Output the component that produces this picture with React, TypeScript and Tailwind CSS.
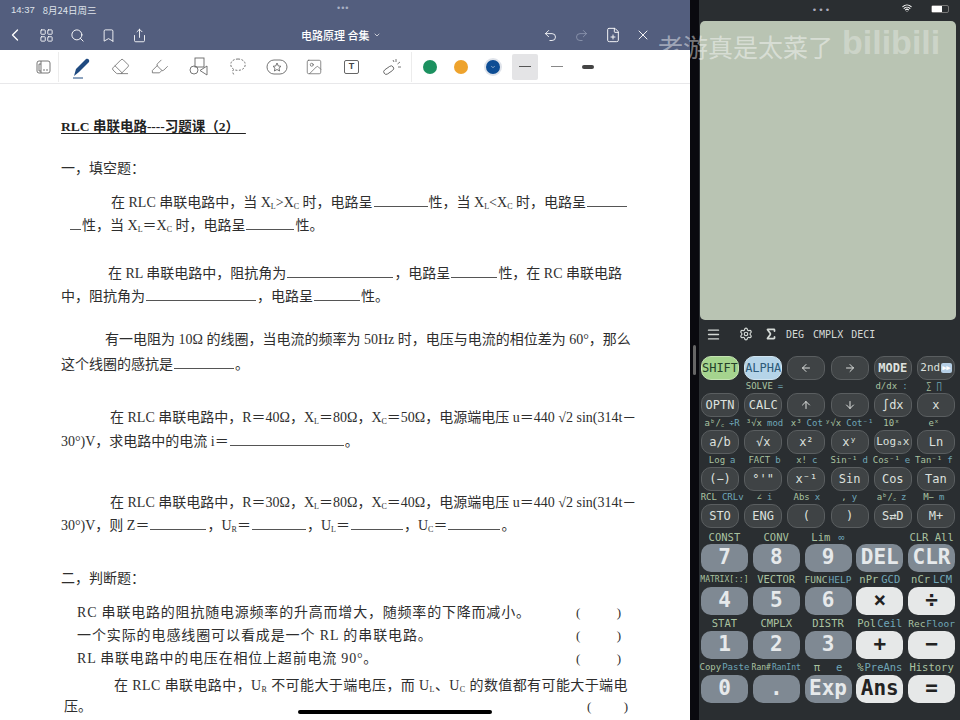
import { ArrowLeft, ArrowRight, ArrowUp, ArrowDown, Bookmark, ChevronDown, ChevronLeft, Eraser, FilePlus, Highlighter, Image, LayoutGrid, Menu, Redo2, Search, Settings, Share, Sigma, Undo2, Wifi, X } from 'lucide-react';
import type { ReactNode } from 'react';

const ink = 'text-[#2e2e2e]';

function DocLine({ top, left = 0, spread = '', children }: { top: number; left?: number; spread?: string; children: ReactNode }) {
  return (
    <p className={`h-[20px] whitespace-nowrap text-[14px] leading-[20px] ${ink} ${spread}`} style={{ marginTop: top, paddingLeft: left }}>
      {children}
    </p>
  );
}

function Blank({ w }: { w: number }) {
  return <span className="mx-[1px] inline-block h-[1px] border-b border-[#555] align-baseline" style={{ width: w }} />;
}

function Sub({ children }: { children: ReactNode }) {
  return <sub className="text-[8px]">{children}</sub>;
}

function Parens({ left, w = 45 }: { left: number; w?: number }) {
  return (
    <span className={`absolute top-0 flex justify-between text-[13px] leading-[20px] ${ink}`} style={{ left, width: w }}>
      <span>(</span>
      <span>)</span>
    </span>
  );
}

function SmallKey({ children, tone = 'dark' }: { children: ReactNode; tone?: 'dark' | 'green' | 'blue' }) {
  const cls = tone === 'green' ? 'bg-[#a5d48e] text-[#24402a] border-[#c4e4b2]' : tone === 'blue' ? 'bg-[#b5d4e8] text-[#2d5a78] border-[#d0e4f0]' : 'bg-[#3f4345] text-[#dde0de] border-[#5a5e60]';
  return <div className={`flex h-[24px] w-[38px] items-center justify-center overflow-hidden rounded-[10px] border text-[12px] ${cls}`}>{children}</div>;
}

function BigKey({ children, tone = 'gray', size = 'text-[21px]' }: { children: ReactNode; tone?: 'gray' | 'white'; size?: string }) {
  const cls = tone === 'white' ? 'bg-[#e6e8e8] text-[#222]' : 'bg-[#7f8993] text-[#e6e9eb]';
  return <div className={`flex h-[28px] w-[47px] items-center justify-center rounded-[10px] font-bold ${size} ${cls}`}>{children}</div>;
}

function LabelRow({ items, cols = 6 }: { items: [string, string?, string?][]; cols?: number }) {
  const big = cols === 5;
  return (
    <div className={`grid h-[13px] items-center text-center leading-[13px] whitespace-nowrap ${big ? 'grid-cols-5 gap-x-[5px] text-[10.500px]' : 'grid-cols-6 text-[9px]'}`}>
      {items.map(([a, b, extra], i) => (
        <div key={i} className={`flex justify-center overflow-visible ${big ? 'gap-[1px]' : 'gap-[5px]'} ${extra ?? ''}`}>
          <span className="text-[#a9c2a0]">{a}</span>
          {b && <span className="text-[#6fa6b8]">{b}</span>}
        </div>
      ))}
    </div>
  );
}

const row1 = [<ArrowLeft size={12} />, <ArrowRight size={12} />];

export default function App() {
  return (
    <div className="relative flex h-[720px] w-[960px] overflow-hidden bg-black font-['Liberation_Sans',sans-serif]">
      {/* notes app */}
      <div className="flex h-full w-[690px] shrink-0 flex-col bg-white">
        <div className="h-[50px] bg-[#535e7e] text-white">
          <div className="relative flex h-[20px] items-center pl-[11px] text-[9.500px] text-[#dfe3ea]">
            <span className="mr-[8px]">14:37</span>
            <span className="font-['Noto_Sans_CJK_SC',sans-serif]">8月24日周三</span>
            <span className="absolute left-[337px] top-[2px] text-[9px] tracking-[1px] text-[#aab1c4]">•••</span>
          </div>
          <div className="relative flex h-[30px] items-center">
            <ChevronLeft size={20} strokeWidth={1.6} className="ml-[5px]" />
            <LayoutGrid size={15} strokeWidth={1.4} className="ml-[14px]" />
            <Search size={15} strokeWidth={1.5} className="ml-[16px]" />
            <Bookmark size={15} strokeWidth={1.4} className="ml-[16px]" />
            <Share size={15} strokeWidth={1.4} className="ml-[16px]" />
            <div className="ml-[154px] flex items-center gap-[4px] font-['Noto_Sans_CJK_SC',sans-serif] text-[11px] font-medium">
              电路原理 合集 <ChevronDown size={8} />
            </div>
            <Undo2 size={15} strokeWidth={1.4} className="ml-[162px]" />
            <Redo2 size={15} strokeWidth={1.4} className="ml-[16px] text-[#8d96ae]" />
            <FilePlus size={16} strokeWidth={1.4} className="ml-[16px]" />
            <X size={16} strokeWidth={1.4} className="ml-[14px]" />
          </div>
        </div>
        <div className="flex h-[34px] items-center border-b border-[#e8e8ea] text-[#666]">
          <svg width="15" height="14" viewBox="0 0 15 14" fill="none" stroke="#666" strokeWidth="0.9" className="ml-[36px]">
            <rect x="1" y="1" width="13" height="12" rx="2" />
            <path d="M5 1 V13 M5 4 H3 V11 H5 M8 9 V11 M11 9 V11" />
          </svg>
          <div className="ml-[7px] h-[30px] w-[1px] bg-[#ececec]" />
          <svg width="22" height="24" viewBox="0 0 22 24" className="ml-[12px]">
            <path d="M3 21 L5 14 L15 4 C17 3 19 5 18 7 L8 17 Z" fill="#1f4a80" />
            <path d="M2 23 H12" stroke="#1f4a80" strokeWidth="1" />
          </svg>
          <Eraser size={19} strokeWidth={1} className="ml-[18px]" />
          <Highlighter size={19} strokeWidth={1} className="ml-[20px]" />
          <svg width="20" height="20" viewBox="0 0 20 20" fill="none" stroke="#666" strokeWidth="0.9" className="ml-[20px]">
            <rect x="6" y="1" width="9" height="9" />
            <circle cx="5" cy="13" r="4" />
            <path d="M18 9 V18 L11 13.5 Z" />
          </svg>
          <svg width="20" height="20" viewBox="0 0 20 20" fill="none" stroke="#666" strokeWidth="0.9" strokeDasharray="2 1.5" className="ml-[19px]">
            <path d="M10 2 C15 2 18 5 17 9 C16 13 11 14 7 13 C4 12 4 15 6 18" />
            <path d="M10 2 C5 2 2 5 3 9 C3.500 11 5 12 7 13" />
          </svg>
          <svg width="22" height="18" viewBox="0 0 22 18" fill="none" stroke="#666" strokeWidth="0.9" className="ml-[18px]">
            <rect x="1" y="2" width="20" height="14" rx="7" />
            <path d="M11 5 L12.300 8 L15 8.300 L13 10.200 L13.600 13 L11 11.500 L8.400 13 L9 10.200 L7 8.300 L9.700 8 Z" />
          </svg>
          <Image size={18} strokeWidth={1} className="ml-[17px]" />
          <div className="ml-[21px] flex h-[14px] w-[15px] items-center justify-center rounded-[2px] border border-[#666] text-[9px] font-bold text-[#444]">T</div>
          <svg width="20" height="20" viewBox="0 0 20 20" fill="none" stroke="#666" strokeWidth="0.9" className="ml-[23px]">
            <rect x="1" y="11" width="11" height="5" rx="2.500" transform="rotate(-35 6 13)" />
            <path d="M14 2 V5 M18 5 L15.500 7 M19 10 H16 M11 3 L12 5" />
          </svg>
          <div className="ml-[9px] h-[30px] w-[1px] bg-[#ececec]" />
          <div className="ml-[11px] h-[14px] w-[14px] rounded-full bg-[#1c9160]" />
          <div className="ml-[17px] h-[14px] w-[14px] rounded-full bg-[#eea32d]" />
          <div className="ml-[18px] flex h-[14px] w-[14px] items-center justify-center rounded-full bg-[#0d4d94] ring-2 ring-[#dfe3ea]">
            <ChevronDown size={6} className="text-white" />
          </div>
          <div className="ml-[12px] flex h-[26px] w-[26px] items-center justify-center rounded-[2px] bg-[#e4e4e6]">
            <div className="h-[1.500px] w-[12px] bg-[#555]" />
          </div>
          <div className="ml-[13px] h-[1px] w-[12px] bg-[#888]" />
          <div className="ml-[19px] h-[4px] w-[12px] rounded-full bg-[#444]" />
        </div>
        <div className="relative flex-1 overflow-hidden pl-[61px] font-['Liberation_Serif','Noto_Sans_CJK_SC',serif]">
          <p className="mt-[33px] h-[20px] text-[13.500px] font-bold leading-[20px] text-[#222] underline underline-offset-2">RLC 串联电路----习题课（2）&nbsp;&nbsp;</p>
          <DocLine top={22}>一，填空题：</DocLine>
          <DocLine top={14} left={50}>在 RLC 串联电路中，当 X<Sub>L</Sub>&gt;X<Sub>C</Sub> 时，电路呈<Blank w={54} />性，当 X<Sub>L</Sub>&lt;X<Sub>C</Sub> 时，电路呈<Blank w={40} /></DocLine>
          <DocLine top={3} left={8}><Blank w={11} />性，当 X<Sub>L</Sub>＝X<Sub>C</Sub> 时，电路呈<Blank w={48} />性。</DocLine>
          <DocLine top={28} left={47}>在 RL 串联电路中，阻抗角为<Blank w={106} />，电路呈<Blank w={46} />性，在 RC 串联电路</DocLine>
          <DocLine top={3}>中，阻抗角为<Blank w={110} />，电路呈<Blank w={46} />性。</DocLine>
          <DocLine top={23} left={44}>有一电阻为 10Ω 的线圈，当电流的频率为 50Hz 时，电压与电流的相位差为 60°，那么</DocLine>
          <DocLine top={5}>这个线圈的感抗是<Blank w={60} />。</DocLine>
          <DocLine top={33} left={49}>在 RLC 串联电路中，R＝40Ω，X<Sub>L</Sub>＝80Ω，X<Sub>C</Sub>＝50Ω，电源端电压 u＝440 √2 sin(314t－</DocLine>
          <DocLine top={4}>30°)V，求电路中的电流 i＝<Blank w={114} />。</DocLine>
          <DocLine top={41} left={49}>在 RLC 串联电路中，R＝30Ω，X<Sub>L</Sub>＝80Ω，X<Sub>C</Sub>＝40Ω，电源端电压 u＝440 √2 sin(314t－</DocLine>
          <DocLine top={3}>30°)V，则 Z＝<Blank w={56} />，U<Sub>R</Sub>＝<Blank w={54} />，U<Sub>L</Sub>＝<Blank w={52} />，U<Sub>C</Sub>＝<Blank w={52} />。</DocLine>
          <DocLine top={33}>二，判断题：</DocLine>
          <div className="relative mt-[14px]">
            <DocLine top={0} left={16} spread="tracking-[0.8px]">RC 串联电路的阻抗随电源频率的升高而增大，随频率的下降而减小。</DocLine>
            <Parens left={515} />
          </div>
          <div className="relative mt-[3px]">
            <DocLine top={0} left={16} spread="tracking-[0.9px]">一个实际的电感线圈可以看成是一个 RL 的串联电路。</DocLine>
            <Parens left={515} />
          </div>
          <div className="relative mt-[3px]">
            <DocLine top={0} left={16} spread="tracking-[0.8px]">RL 串联电路中的电压在相位上超前电流 90°。</DocLine>
            <Parens left={515} />
          </div>
          <DocLine top={7} left={53} spread="tracking-[0.4px]">在 RLC 串联电路中，U<Sub>R</Sub> 不可能大于端电压，而 U<Sub>L</Sub>、U<Sub>C</Sub> 的数值都有可能大于端电</DocLine>
          <div className="relative mt-[1px]">
            <DocLine top={0} left={3}>压。</DocLine>
            <Parens left={526} w={41} />
          </div>
          {/* home indicator */}
          <div className="absolute bottom-[6px] left-[298px] h-[4px] w-[194px] rounded-full bg-black" />
        </div>
      </div>

      <div className="flex w-[9px] shrink-0 items-center justify-center bg-[#0a0a0f]">
        <div className="h-[30px] w-[3px] rounded-full bg-[#666]" />
      </div>

      {/* calculator */}
      <div className="flex h-full flex-1 flex-col bg-[#2a2e31] font-['DejaVu_Sans_Mono',monospace]">
        <div className="relative flex h-[21px] items-center justify-center text-white">
          <span className="ml-[-16px] text-[9px] tracking-[1px] text-[#aab]">•••</span>
          <Wifi size={10} strokeWidth={2.5} className="absolute left-[203px] top-[3px]" />
          <div className="absolute left-[232px] top-[5px] h-[8px] w-[18px] rounded-[2px] border border-[#777]">
            <div className="h-full w-[10px] bg-white" />
          </div>
        </div>
        <div className="ml-[1px] mr-[4px] h-[299px] rounded-[5px] bg-[#b9c4b3]" />
        <div className="flex h-[28px] items-center pl-[7px] text-[#d5dad7]">
          <Menu size={15} strokeWidth={2.2} />
          <Settings size={14} className="ml-[18px]" />
          <Sigma size={14} strokeWidth={3} className="ml-[11px]" />
          <span className="ml-[8px] text-[10px]">DEG</span>
          <span className="ml-[9px] text-[10px]">CMPLX</span>
          <span className="ml-[8px] text-[10px]">DECI</span>
        </div>
        <div className="ml-[2px] mt-[8px] w-[254px]">
          <div className="flex justify-between">
            <SmallKey tone="green">SHIFT</SmallKey>
            <SmallKey tone="blue">ALPHA</SmallKey>
            <SmallKey>{row1[0]}</SmallKey>
            <SmallKey>{row1[1]}</SmallKey>
            <SmallKey><span className="font-bold">MODE</span></SmallKey>
            <SmallKey><span className="text-[11px]">2nd</span><span className="ml-[1px] rounded-[2px] bg-[#b5cfe6] px-[1px] text-[7px] text-white">▶▶</span></SmallKey>
          </div>
          <LabelRow items={[[''], ['SOLVE', '='], [''], [''], ['d/dx', ':'], ['∑', '∏']]} />
          <div className="flex justify-between">
            <SmallKey>OPTN</SmallKey>
            <SmallKey>CALC</SmallKey>
            <SmallKey><ArrowUp size={12} /></SmallKey>
            <SmallKey><ArrowDown size={12} /></SmallKey>
            <SmallKey>∫dx</SmallKey>
            <SmallKey>x</SmallKey>
          </div>
          <LabelRow items={[['aᵇ/꜀', '÷R'], ['³√x', 'mod'], ['x³', 'Cot'], ['ʸ√x', 'Cot⁻¹'], ['10ˣ'], ['eˣ']]} />
          <div className="flex justify-between">
            <SmallKey>a/b</SmallKey>
            <SmallKey>√x</SmallKey>
            <SmallKey>x²</SmallKey>
            <SmallKey>xʸ</SmallKey>
            <SmallKey><span className="text-[11px]">Logₐx</span></SmallKey>
            <SmallKey>Ln</SmallKey>
          </div>
          <LabelRow items={[['Log', 'a'], ['FACT', 'b'], ['x!', 'c'], ['Sin⁻¹', 'd'], ['Cos⁻¹', 'e'], ['Tan⁻¹', 'f']]} />
          <div className="flex justify-between">
            <SmallKey>(−)</SmallKey>
            <SmallKey>°'"</SmallKey>
            <SmallKey>x⁻¹</SmallKey>
            <SmallKey>Sin</SmallKey>
            <SmallKey>Cos</SmallKey>
            <SmallKey>Tan</SmallKey>
          </div>
          <LabelRow items={[['RCL', 'CRLv'], ['∠', 'i'], ['Abs', 'x'], [',', 'y'], ['aᵇ/꜀', 'z'], ['M−', 'm']]} />
          <div className="flex justify-between">
            <SmallKey>STO</SmallKey>
            <SmallKey>ENG</SmallKey>
            <SmallKey>(</SmallKey>
            <SmallKey>)</SmallKey>
            <SmallKey>S⇄D</SmallKey>
            <SmallKey>M+</SmallKey>
          </div>
          <div className="mt-[3px]">
            <LabelRow cols={5} items={[['CONST'], ['CONV'], ['Lim', '∞', 'gap-[8px]'], [''], ['CLR All']]} />
          </div>
          <div className="flex justify-between">
            <BigKey>7</BigKey>
            <BigKey>8</BigKey>
            <BigKey>9</BigKey>
            <BigKey>DEL</BigKey>
            <BigKey>CLR</BigKey>
          </div>
          <div className="my-[1px]">
            <LabelRow cols={5} items={[['MATRIX[::]', undefined, 'text-[8px]'], ['VECTOR'], ['FUNC', 'HELP', 'text-[9.500px]'], ['nPr', 'GCD', 'gap-[3px]'], ['nCr', 'LCM', 'gap-[3px]']]} />
          </div>
          <div className="flex justify-between">
            <BigKey>4</BigKey>
            <BigKey>5</BigKey>
            <BigKey>6</BigKey>
            <BigKey tone="white">×</BigKey>
            <BigKey tone="white">÷</BigKey>
          </div>
          <div className="my-[1.500px]">
            <LabelRow cols={5} items={[['STAT'], ['CMPLX'], ['DISTR'], ['Pol', 'Ceil'], ['Rec', 'Floor', 'text-[9.500px]']]} />
          </div>
          <div className="flex justify-between">
            <BigKey>1</BigKey>
            <BigKey>2</BigKey>
            <BigKey>3</BigKey>
            <BigKey tone="white">+</BigKey>
            <BigKey tone="white">−</BigKey>
          </div>
          <div className="my-[1.500px]">
            <LabelRow cols={5} items={[['Copy', 'Paste', 'text-[9px] gap-0'], ['Ran#', 'RanInt', 'text-[8px] gap-0'], ['π', 'e', 'gap-[16px]'], ['%', 'PreAns'], ['History']]} />
          </div>
          <div className="flex justify-between">
            <BigKey>0</BigKey>
            <BigKey>.</BigKey>
            <BigKey>Exp</BigKey>
            <BigKey tone="white">Ans</BigKey>
            <BigKey tone="white">=</BigKey>
          </div>
        </div>
      </div>

      {/* video watermark */}
      <div className="absolute left-[658px] top-[34px] font-['Noto_Sans_CJK_SC',sans-serif] text-[25px] leading-[24px] whitespace-nowrap text-white/45">老游真是太菜了</div>
      <div className="absolute left-[842px] top-[20px] font-['Liberation_Sans',sans-serif] text-[34px] font-bold leading-[44px] text-white/30">bilibili</div>
    </div>
  );
}
